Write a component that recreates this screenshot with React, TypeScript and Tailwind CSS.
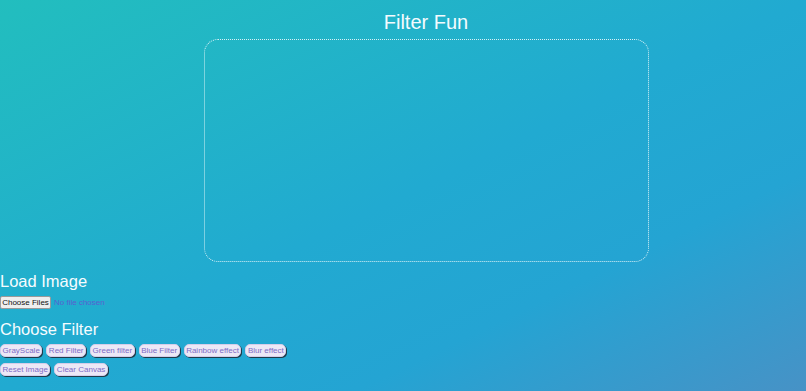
import React from "react";

const filters = ["GrayScale", "Red Filter", "Green filter", "Blue Filter", "Rainbow effect", "Blur effect"];
const actions = ["Reset Image", "Clear Canvas"];

function FilterButton({ label }: { label: string }) {
  return (
    <button className="h-[13px] px-[1.5px] rounded-[5px] bg-[#ece8f6] text-[#7d6cc6] text-[8px] leading-[11px] whitespace-nowrap border border-[#d4cdea] shadow-[1px_1px_0_0_#1f3b4a]">
      {label}
    </button>
  );
}

export default function App() {
  return (
    <div
      className="w-[806px] h-[391px] overflow-hidden text-white bg-[linear-gradient(to_bottom_right,#22bebe_0%,#21aad1_50%,#24a4d3_72%,#4792c6_100%)]"
      style={{ fontFamily: "'Liberation Sans', Arial, sans-serif" }}
    >
      {/* Title + canvas */}
      <h1 className="text-[20px] leading-[22px] pt-[11px] pl-[204px] w-[648px] text-center text-[#f4fbff]">Filter Fun</h1>
      <div className="ml-[204px] mt-[6px] w-[445px] h-[223px] rounded-[14px] border border-dotted border-[#d8f1f6]" />

      {/* Load */}
      <h2 className="mt-[10px] text-[16.5px] leading-[19px] text-[#f6fcff]">Load Image</h2>
      <div className="mt-[5px] flex items-center gap-[3px]">
        <span className="h-[13px] w-[51px] flex items-center justify-center whitespace-nowrap bg-[#efefef] border border-[#9a9a9a] rounded-[2px] text-[8px] text-[#111]">
          Choose Files
        </span>
        <span className="text-[8px] text-[#5b5fcf] whitespace-nowrap">No file chosen</span>
      </div>

      {/* Filters */}
      <h2 className="mt-[11px] text-[16.5px] leading-[19px] text-[#f6fcff]">Choose Filter</h2>
      <div className="mt-[5px] flex gap-[4px]">
        {filters.map((f) => (
          <FilterButton key={f} label={f} />
        ))}
      </div>
      <div className="mt-[6px] flex gap-[4px]">
        {actions.map((a) => (
          <FilterButton key={a} label={a} />
        ))}
      </div>
    </div>
  );
}
